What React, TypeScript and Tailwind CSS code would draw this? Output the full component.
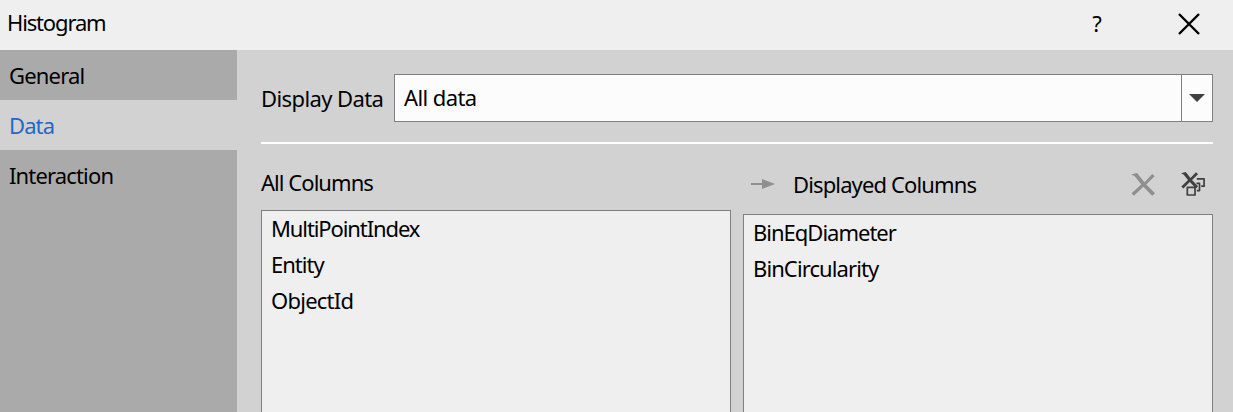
import React from "react";

function Row({ children, className = "" }: { children: React.ReactNode; className?: string }) {
  return <li className={`h-9 pl-[9px] leading-[34px] ${className}`}>{children}</li>;
}

export default function App() {
  return (
    <div className="flex h-[412px] w-[1233px] flex-col overflow-hidden whitespace-nowrap bg-[#d2d2d2] font-['Noto_Sans',sans-serif] text-[22px] text-black">
      <header className="flex h-[50px] shrink-0 items-start justify-between bg-[#efefef] pl-[7px] pr-[33px]">
        <h1 className="leading-[45px] tracking-[-1.15px]">Histogram</h1>
        <div className="flex items-start">
          <button className="mr-[75px] w-[12px] text-center leading-[47px]">?</button>
          <svg className="mt-[13px]" width="22" height="22" viewBox="0 0 22 22" stroke="#000" strokeWidth="2.4">
            <path d="M1 1L21 21M21 1L1 21" />
          </svg>
        </div>
      </header>
      <div className="flex min-h-0 flex-1">
        <nav className="w-[237px] shrink-0 bg-[#aaaaaa] leading-[50px]">
          <div className="h-[50px] pl-[9px] tracking-[-0.8px]">General</div>
          <div className="h-[50px] bg-[#d2d2d2] pl-[9px] tracking-[-0.9px] text-[#1f69c4]">Data</div>
          <div className="h-[50px] pl-[9px] tracking-[-0.85px]">Interaction</div>
        </nav>
        <main className="flex min-w-0 flex-1 flex-col pl-6 pr-5 pt-6">
          <div className="flex h-12 shrink-0">
            <label className="w-[133px] leading-[48px] tracking-[-0.6px]">Display Data</label>
            <div className="flex flex-1 border border-[#808080] bg-[#fcfcfc]">
              <span className="flex-1 pl-[9px] leading-[44px] tracking-[-0.6px]">All data</span>
              <span className="flex w-[31px] items-center justify-center border-l border-[#808080]">
                <svg width="16" height="8" viewBox="0 0 16 8" fill="#404040"><path d="M0 0H16L8 8Z" /></svg>
              </span>
            </div>
          </div>
          <div className="mt-5 h-[2px] shrink-0 bg-white" />
          <div className="flex min-h-0 flex-1 gap-3">
            <section className="flex w-[470px] flex-col">
              <h2 className="h-[66px] shrink-0 pt-[18px] leading-[40px] tracking-[-0.95px]">All Columns</h2>
              <ul className="flex-1 border border-b-0 border-[#808080] bg-[#efefef]">
                <Row className="tracking-[-1.1px]">MultiPointIndex</Row>
                <Row className="tracking-[-1px]">Entity</Row>
                <Row className="tracking-[-0.75px]">ObjectId</Row>
              </ul>
            </section>
            <section className="flex w-[470px] flex-col">
              <div className="flex h-[70px] shrink-0 items-start">
                <svg className="ml-[8px] mt-[34px]" width="24" height="12" viewBox="0 0 24 12" fill="#8f8f8f">
                  <path d="M0 5H11V1L24 6L11 11V7H0Z" />
                </svg>
                <h2 className="ml-[18px] flex-1 pt-[20px] leading-[40px] tracking-[-0.87px]">Displayed Columns</h2>
                <svg className="mr-[26px] mt-[29px]" width="24" height="23" viewBox="0 0 24 23" fill="#8f8f8f">
                  <path d="M0 1.5L6 0L13.5 9.3L21.2 1L23.7 3.2L15.2 11.5L24 20.3L21.2 22.8L12.3 13.7L3 22.8L0.5 20.3L10.3 11.5L3.5 3Z" />
                </svg>
                <svg className="mr-[8px] mt-[28px]" width="24" height="24" viewBox="0 0 24 24" fill="none" stroke="#404040" strokeWidth="1.7" strokeLinejoin="round">
                  <path d="M0 1.2L4.8 0L9.5 6L15 0.3L17 2.2L11 8L17 14.3L15 16.4L8.8 10L2.4 16.4L0.3 14.5L7 8L2.5 2.5Z" fill="#404040" stroke="none" />
                  <path d="M15.8 6.8H23.1V14.2H20.2M15.5 11.4H18.5V18.6H15.8M6.3 15.4H14V23H6.3Z" />
                </svg>
              </div>
              <ul className="flex-1 border border-b-0 border-[#808080] bg-[#efefef]">
                <Row className="tracking-[-1px]">BinEqDiameter</Row>
                <Row className="tracking-[-0.9px]">BinCircularity</Row>
              </ul>
            </section>
          </div>
        </main>
      </div>
    </div>
  );
}
